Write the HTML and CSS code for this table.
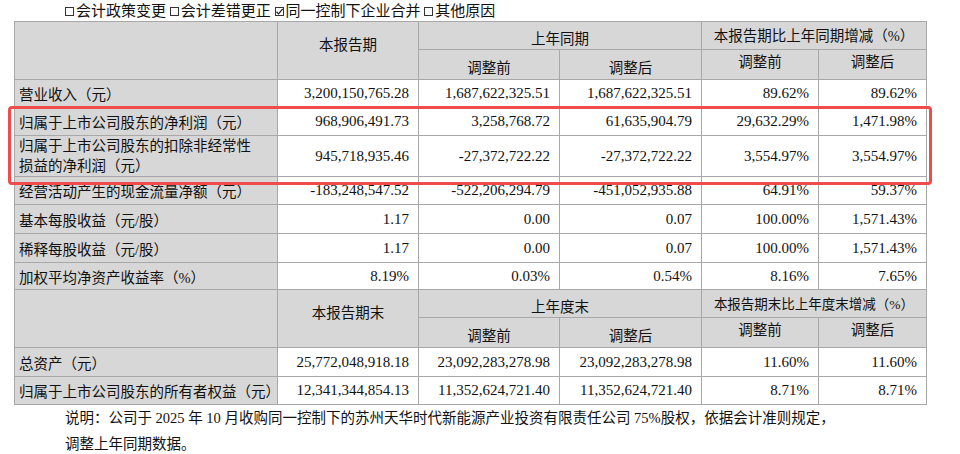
FILE: index.html
```html
<!DOCTYPE html>
<html lang="zh-CN">
<head>
<meta charset="utf-8">
<title>主要会计数据</title>
<link rel="stylesheet" href="styles.css">
</head>
<body>
<div class="page">
  <p class="opts"><span class="box"></span>会计政策变更 <span class="box"></span>会计差错更正 <span class="box"><svg viewBox="0 0 8 8" width="9" height="9"><path d="M1.3 4.2 L3.2 6.1 L6.8 1.6" fill="none" stroke="#222" stroke-width="1.1"/></svg></span>同一控制下企业合并 <span class="box"></span>其他原因</p>
  <div class="table-wrap">
    <table class="data">
      <colgroup>
        <col class="c1"><col class="c2"><col class="c3"><col class="c4"><col class="c5"><col class="c6">
      </colgroup>
      <tr class="h28">
        <th rowspan="2"></th>
        <th rowspan="2" class="hmain">本报告期</th>
        <th colspan="2" class="hgroup">上年同期</th>
        <th colspan="2" class="hpct">本报告期比上年同期增减（%）</th>
      </tr>
      <tr class="h28">
        <th class="hsub">调整前</th>
        <th class="hsub">调整后</th>
        <th class="hsub up">调整前</th>
        <th class="hsub up">调整后</th>
      </tr>
      <tr class="h28">
        <td class="lbl">营业收入（元）</td>
        <td class="num">3,200,150,765.28</td>
        <td class="num">1,687,622,325.51</td>
        <td class="num">1,687,622,325.51</td>
        <td class="num">89.62%</td>
        <td class="num">89.62%</td>
      </tr>
      <tr class="h28">
        <td class="lbl">归属于上市公司股东的净利润（元）</td>
        <td class="num">968,906,491.73</td>
        <td class="num">3,258,768.72</td>
        <td class="num">61,635,904.79</td>
        <td class="num">29,632.29%</td>
        <td class="num">1,471.98%</td>
      </tr>
      <tr class="h40">
        <td class="lbl two">归属于上市公司股东的扣除非经常性<br>损益的净利润（元）</td>
        <td class="num">945,718,935.46</td>
        <td class="num">-27,372,722.22</td>
        <td class="num">-27,372,722.22</td>
        <td class="num">3,554.97%</td>
        <td class="num">3,554.97%</td>
      </tr>
      <tr class="h28">
        <td class="lbl">经营活动产生的现金流量净额（元）</td>
        <td class="num">-183,248,547.52</td>
        <td class="num">-522,206,294.79</td>
        <td class="num">-451,052,935.88</td>
        <td class="num">64.91%</td>
        <td class="num">59.37%</td>
      </tr>
      <tr class="h29">
        <td class="lbl">基本每股收益（元/股）</td>
        <td class="num">1.17</td>
        <td class="num">0.00</td>
        <td class="num">0.07</td>
        <td class="num">100.00%</td>
        <td class="num">1,571.43%</td>
      </tr>
      <tr class="h29">
        <td class="lbl">稀释每股收益（元/股）</td>
        <td class="num">1.17</td>
        <td class="num">0.00</td>
        <td class="num">0.07</td>
        <td class="num">100.00%</td>
        <td class="num">1,571.43%</td>
      </tr>
      <tr class="h27">
        <td class="lbl">加权平均净资产收益率（%）</td>
        <td class="num">8.19%</td>
        <td class="num">0.03%</td>
        <td class="num">0.54%</td>
        <td class="num">8.16%</td>
        <td class="num">7.65%</td>
      </tr>
      <tr class="h28">
        <th rowspan="2"></th>
        <th rowspan="2" class="hmain">本报告期末</th>
        <th colspan="2" class="hgroup">上年度末</th>
        <th colspan="2" class="hpct small">本报告期末比上年度末增减（%）</th>
      </tr>
      <tr class="h28">
        <th class="hsub">调整前</th>
        <th class="hsub">调整后</th>
        <th class="hsub up">调整前</th>
        <th class="hsub up">调整后</th>
      </tr>
      <tr class="h29">
        <td class="lbl">总资产（元）</td>
        <td class="num">25,772,048,918.18</td>
        <td class="num">23,092,283,278.98</td>
        <td class="num">23,092,283,278.98</td>
        <td class="num">11.60%</td>
        <td class="num">11.60%</td>
      </tr>
      <tr class="h28">
        <td class="lbl">归属于上市公司股东的所有者权益（元）</td>
        <td class="num">12,341,344,854.13</td>
        <td class="num">11,352,624,721.40</td>
        <td class="num">11,352,624,721.40</td>
        <td class="num">8.71%</td>
        <td class="num">8.71%</td>
      </tr>
    </table>
    <div class="highlight"></div>
  </div>
  <p class="note">说明：公司于 2025 年 10 月收购同一控制下的苏州天华时代新能源产业投资有限责任公司 75%股权，依据会计准则规定，<br>调整上年同期数据。</p>
</div>
</body>
</html>
```

FILE: styles.css
```css
html, body {
  margin: 0;
  padding: 0;
  background: #ffffff;
}

body {
  font-family: "Liberation Serif", "Noto Sans CJK SC", serif;
  color: #111111;
  width: 960px;
  height: 454px;
  overflow: hidden;
}

.page {
  display: flex;
  flex-direction: column;
}

.opts {
  margin: 0;
  height: 21px;
  line-height: 22px;
  padding-left: 65px;
  font-size: 15px;
  white-space: nowrap;
}

.box {
  display: inline-block;
  width: 7px;
  height: 7px;
  border: 1px solid #333333;
  margin-right: 2px;
  vertical-align: 0;
  position: relative;
}

.box svg {
  position: absolute;
  left: -1px;
  top: -1px;
}

.table-wrap {
  position: relative;
  padding-left: 14px;
}

.data {
  border-collapse: collapse;
  table-layout: fixed;
  width: 912px;
}

.c1 { width: 263px; }
.c2 { width: 141px; }
.c3 { width: 141px; }
.c4 { width: 142px; }
.c5 { width: 117px; }
.c6 { width: 108px; }

.data th,
.data td {
  border: 1px solid #a8a8a8;
  padding: 0 9px 0 4px;
  white-space: nowrap;
}

.data th {
  background: #d7d7d7;
  font-weight: normal;
  text-align: center;
  font-size: 14.5px;
  padding: 0;
}

.h27 { height: 27px; }
.h28 { height: 28px; }
.h29 { height: 29px; }
.h40 { height: 40px; }

.hmain {
  padding-bottom: 14px !important;
}

.hgroup {
  padding-top: 4px !important;
}

.hpct {
  padding-bottom: 2px !important;
}

.hpct.small {
  font-size: 13.5px !important;
}

.hsub {
  padding-top: 4px !important;
}

.hsub.up {
  padding-top: 0 !important;
  padding-bottom: 8px !important;
}

.lbl {
  background: #d7d7d7;
  text-align: left;
  font-size: 14.5px;
}

.lbl.two {
  line-height: 20px;
}

.num {
  background: #ffffff;
  text-align: right;
  font-size: 15px;
}

.highlight {
  position: absolute;
  left: 8px;
  top: 85px;
  width: 918px;
  height: 73px;
  border: 3px solid #f24b4b;
  border-radius: 4px;
  pointer-events: none;
}

.note {
  margin: 0;
  padding-left: 65px;
  padding-top: 0;
  font-size: 14.5px;
  line-height: 26px;
  white-space: nowrap;
}
```
